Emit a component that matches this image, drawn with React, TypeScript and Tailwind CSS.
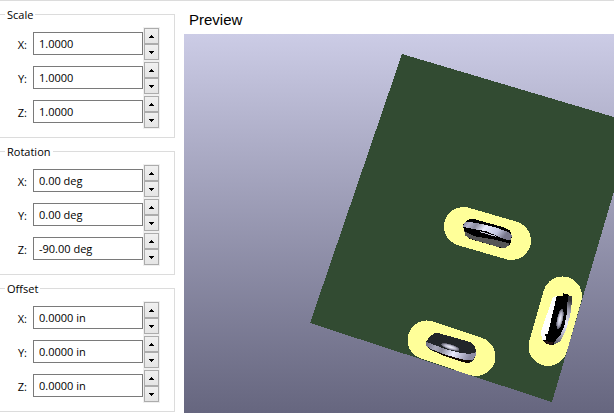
type GroupProps = { title: string; values: string[] };

const AXES = ['X', 'Y', 'Z'];

function SpinButton({ label, down = false }: { label: string; down?: boolean }) {
  return (
    <button
      type="button"
      aria-label={label}
      className="flex h-4 w-[15px] items-center justify-center border border-[#acacac] bg-linear-to-b from-[#f0f0f0] to-[#e5e5e5]"
    >
      <svg width="5" height="3" viewBox="0 0 5 3" shapeRendering="crispEdges" aria-hidden="true">
        <path d={down ? 'M0 0h5v1h-1v1h-1v1h-1v-1h-1v-1h-1z' : 'M2 0h1v1h1v1h1v1h-5v-1h1v-1h1z'} />
      </svg>
    </button>
  );
}

function SpinRow({ group, axis, value }: { group: string; axis: string; value: string }) {
  const id = `${group}-${axis}`.toLowerCase();
  return (
    <div className="flex h-[34px] items-start pr-[14px]">
      <label htmlFor={id} className="w-[27px] pt-[10px] text-right">
        {axis}:
      </label>
      <input
        id={id}
        type="text"
        defaultValue={value}
        className="mt-[5px] ml-[6px] h-[23px] w-full min-w-0 flex-1 border border-[#7a7a7a] bg-white px-[5px] pb-px outline-none"
      />
      <div className="flex flex-col border border-[#f0f0f0]">
        <SpinButton label={`Increase ${group} ${axis}`} />
        <SpinButton label={`Decrease ${group} ${axis}`} down />
      </div>
    </div>
  );
}

function Group({ title, values }: GroupProps) {
  return (
    <fieldset className="min-w-0 border border-l-0 border-[#dcdcdc] pt-[5px] pb-2">
      <legend className="ml-[5px] h-[15px] px-0.5 leading-[15px]">{title}</legend>
      {AXES.map((axis, i) => (
        <SpinRow key={axis} group={title} axis={axis} value={values[i]} />
      ))}
    </fieldset>
  );
}

function BoardView() {
  return (
    <svg className="block h-full w-full" role="img" aria-label="3D board preview">
      <defs>
        <linearGradient id="barrelA" x1="0" x2="1" y1="0" y2="0.3">
          <stop offset="0" stopColor="#77778c" />
          <stop offset="0.15" stopColor="#b4b4cc" />
          <stop offset="0.3" stopColor="#8c8c9e" />
          <stop offset="0.5" stopColor="#e6e8fa" />
          <stop offset="0.8" stopColor="#c2c6e0" />
          <stop offset="1" stopColor="#77778c" />
        </linearGradient>
        <linearGradient id="barrelB" x1="0" x2="1" y1="0" y2="0.2">
          <stop offset="0" stopColor="#66667a" />
          <stop offset="0.25" stopColor="#a8a8bc" />
          <stop offset="0.4" stopColor="#8a8a9c" />
          <stop offset="0.65" stopColor="#e8eaff" />
          <stop offset="1" stopColor="#8c8ca4" />
        </linearGradient>
        <linearGradient id="barrelC" x1="0.4" x2="0.2" y1="0" y2="1">
          <stop offset="0" stopColor="#333338" />
          <stop offset="0.2" stopColor="#9696a8" />
          <stop offset="0.5" stopColor="#eeeeff" />
          <stop offset="0.75" stopColor="#b0b0c4" />
          <stop offset="1" stopColor="#55555f" />
        </linearGradient>
        <radialGradient id="glint">
          <stop offset="0" stopColor="#f4f6ff" />
          <stop offset="0.6" stopColor="#b4b4c8" />
          <stop offset="1" stopColor="#555562" />
        </radialGradient>
      </defs>
      <g transform="translate(-184 -34)" shapeRendering="crispEdges">
        <path d="M402 54 634 123 552 402 310 323Z" fill="#324b32" />
        <g stroke="#ffff99" strokeWidth="39" strokeLinecap="round">
          <path d="M463.5 226.5 511.5 240.5" />
          <path d="M427 340 476 356.5" />
          <path d="M562.5 296 548 346.5" />
        </g>
        <g transform="translate(430 195) scale(.33333)">
          <path d="M99 90 106 80 120 72 135 73 225 98 240 107 245 120 244 138 238 150 226 158 210 158 120 132 106 122 102 105Z" fill="#000" />
          <path d="M103 108 135 124 190 133 240 146 236 152 226 159 207 157 120 131 106 122Z" fill="#555" />
          <path d="M99 94 103 84 112 80 150 86 200 98 236 112 245 122 243 136 225 133 198 122 150 106 110 98Z" fill="url(#barrelA)" />
          <path d="M148 106 170 111 196 122" stroke="#000" strokeWidth="3" fill="none" />
          <path d="M150 110 198 124" stroke="#c8c8dc" strokeWidth="3" fill="none" />
        </g>
        <g transform="translate(395 310) scale(.33333)">
          <path d="M92 96 106 78 120 69 133 70 225 96 238 107 243 120 242 138 234 153 222 159 207 156 150 138 104 119 94 108Z" fill="#22262a" />
          <path d="M92 95 103 99 150 117 194 128 222 132 242 127 242 137 232 151 205 149 150 134 110 118 94 108Z" fill="url(#barrelB)" />
          <path d="M110 119 150 134 205 149 232 149 222 159 207 157 150 139Z" fill="#120800" />
          <ellipse cx="166" cy="111" rx="29" ry="8" transform="rotate(17 166 111)" fill="url(#glint)" />
        </g>
        <g transform="translate(510 260) scale(.33333)">
          <path d="M128 113 140 108 148 110 120 228 110 245 96 240 93 214Z" fill="#fff" />
          <path d="M140 109 158 108 158 100 172 102 184 112 178 170 160 215 142 247 126 257 108 250 98 240 110 241 105 224 114 220Z" fill="#000" />
          <path d="M173 106 185 109 186 125 180 170 166 215 150 245 134 253 130 249 151 225 164 195 172 150Z" fill="url(#barrelC)" />
          <ellipse cx="150" cy="177" rx="9" ry="31" transform="rotate(12 150 177)" fill="url(#glint)" />
          <path d="M98 241 122 246 130 248 126 257 112 252Z" fill="#241414" />
        </g>
      </g>
    </svg>
  );
}

export default function App() {
  return (
    <div className="flex h-screen border-t border-[#dcdcdc] bg-white text-black">
      <form className="flex w-[175px] shrink-0 flex-col gap-[6px] pt-[6px] font-['Open_Sans','Noto_Sans',sans-serif] text-[11px] leading-[15px]">
        <Group title="Scale" values={['1.0000', '1.0000', '1.0000']} />
        <Group title="Rotation" values={['0.00 deg', '0.00 deg', '-90.00 deg']} />
        <Group title="Offset" values={['0.0000 in', '0.0000 in', '0.0000 in']} />
      </form>
      <main className="ml-[9px] flex min-w-0 flex-1 flex-col pb-[3px]">
        <h1 className="h-[33px] pt-[10px] pl-[5px] font-['Liberation_Sans',Arial,sans-serif] text-[15px] leading-[18px]">
          Preview
        </h1>
        <div className="min-h-0 flex-1 bg-linear-to-b from-[#cccce6] to-[#66667f]">
          <BoardView />
        </div>
      </main>
    </div>
  );
}
